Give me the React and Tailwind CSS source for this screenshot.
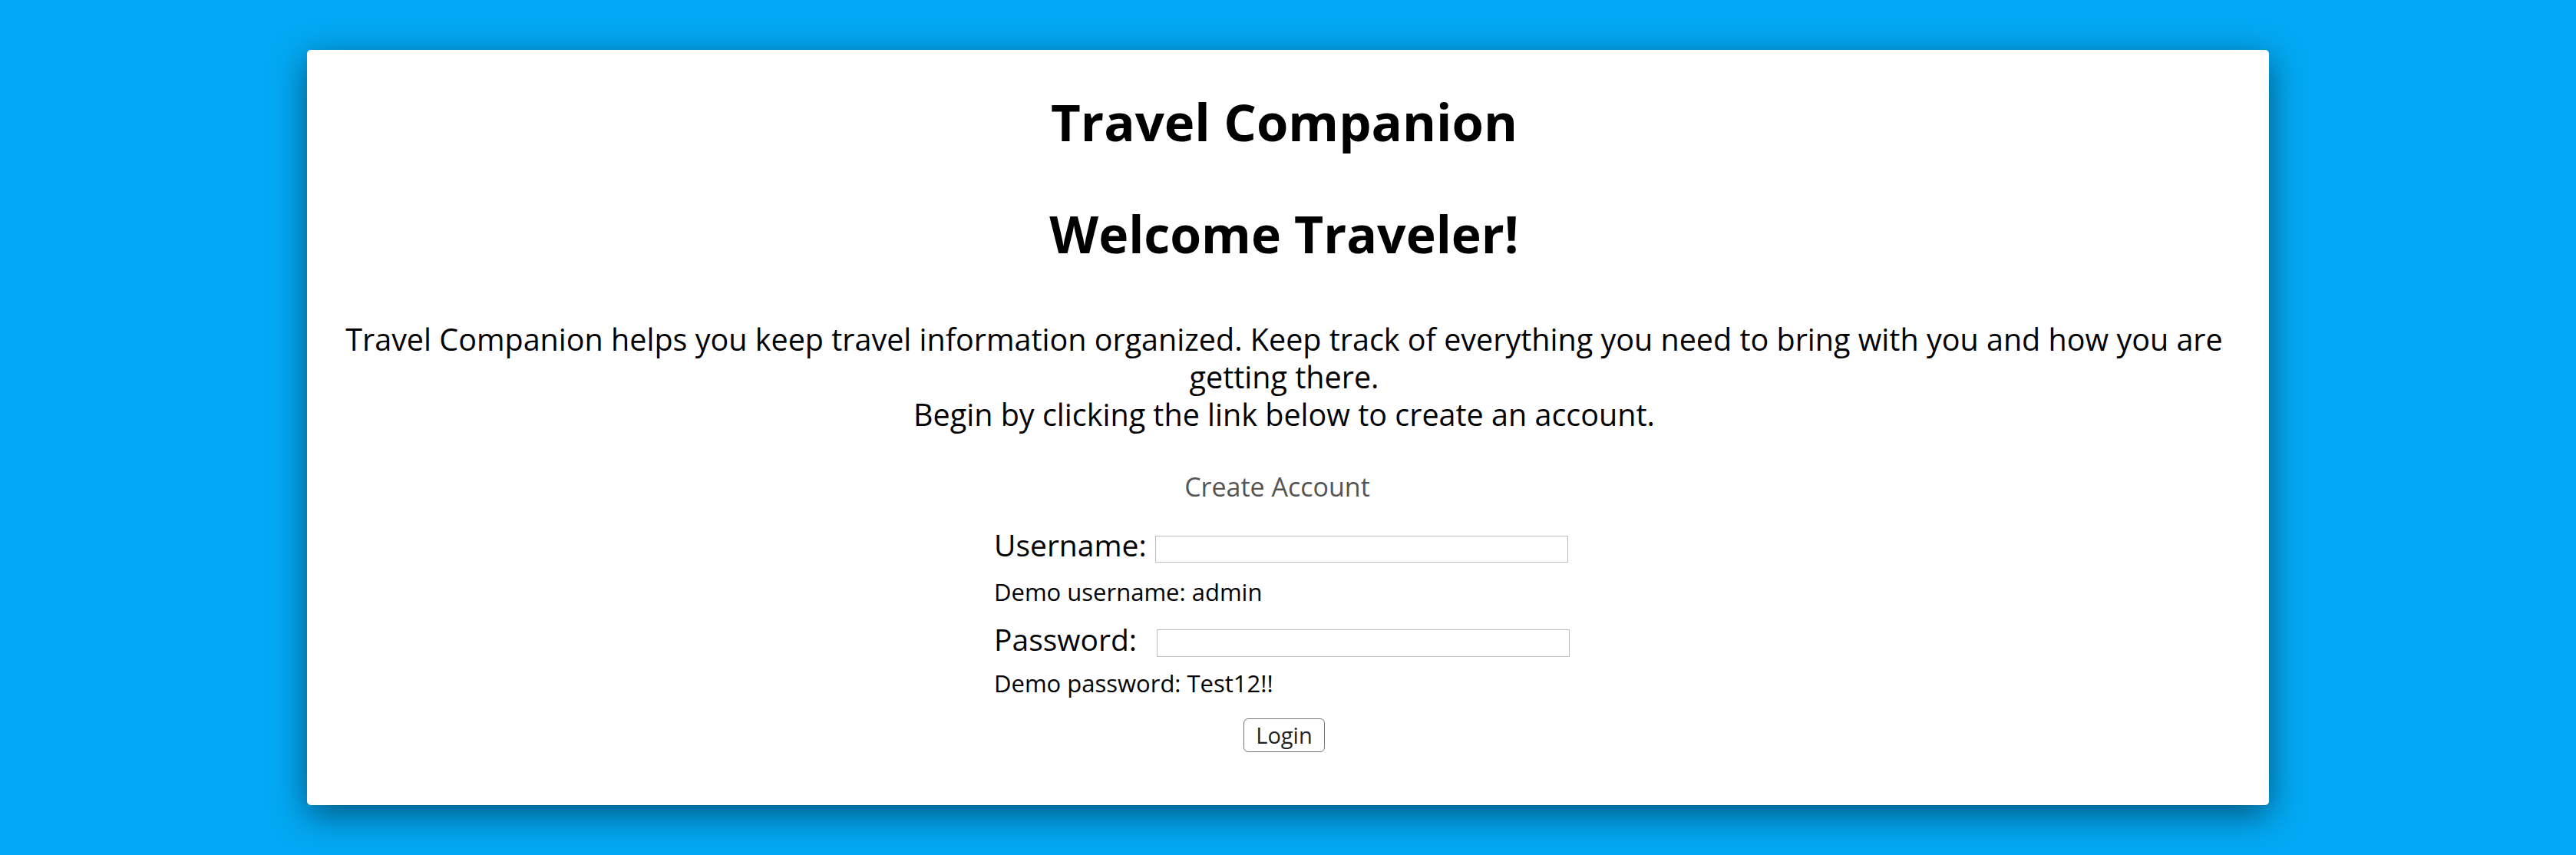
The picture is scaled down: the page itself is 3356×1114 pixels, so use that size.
import React from 'react';

const font = { fontFamily: '"Open Sans", "Noto Sans", sans-serif' };

export default function App() {
  return (
    <div className="min-h-screen w-full bg-[#03a9f4] pt-[65px] pb-[65px]" style={font}>
      <div className="mx-auto w-[2556px] rounded-[5px] bg-white pl-[20px] pr-[30px] pt-[53px] pb-[69px] text-black shadow-[0_12px_45px_rgba(0,0,0,0.5)]">
        {/* Headings */}
        <h1 className="text-center text-[67px] font-bold leading-[80px]">Travel Companion</h1>
        <h2 className="mt-[66px] text-center text-[66px] font-bold leading-[80px]">Welcome Traveler!</h2>

        {/* Intro */}
        <p className="mt-[74px] whitespace-nowrap text-center text-[39.5px] leading-[49px]">
          Travel Companion helps you keep travel information organized. Keep track of everything you need to bring with you and how you are
          <br />
          getting there.
          <br />
          Begin by clicking the link below to create an account.
        </p>

        <div className="mt-[49px] pr-[18px] text-center">
          <a href="#" className="text-[34px] leading-[40px] text-[#555555] no-underline">Create Account</a>
        </div>

        {/* Login form */}
        <form className="mx-auto mt-[33px] w-[756px]" onSubmit={(e) => e.preventDefault()}>
          <div className="flex items-end">
            <label className="w-[210px] shrink-0 text-[39px] leading-[46px]">Username:</label>
            <input type="text" className="h-[35px] w-[538px] border border-[#bdbdbd] bg-white outline-none" />
          </div>
          <p className="mt-[19px] text-[31px] leading-[38px]">Demo username: admin</p>

          <div className="mt-[20px] flex items-end">
            <label className="w-[212px] shrink-0 text-[39px] leading-[46px]">Password:</label>
            <input type="password" className="h-[36px] w-[538px] border border-[#bdbdbd] bg-white outline-none" />
          </div>
          <p className="mt-[15px] text-[31px] leading-[38px]">Demo password: Test12!!</p>

          <div className="mt-[27px] flex justify-center">
            <button
              type="submit"
              className="h-[44px] w-[106px] rounded-[6px] border border-[#767676] bg-white text-[29px] leading-[40px] text-[#222222]"
            >
              Login
            </button>
          </div>
        </form>
      </div>
    </div>
  );
}
